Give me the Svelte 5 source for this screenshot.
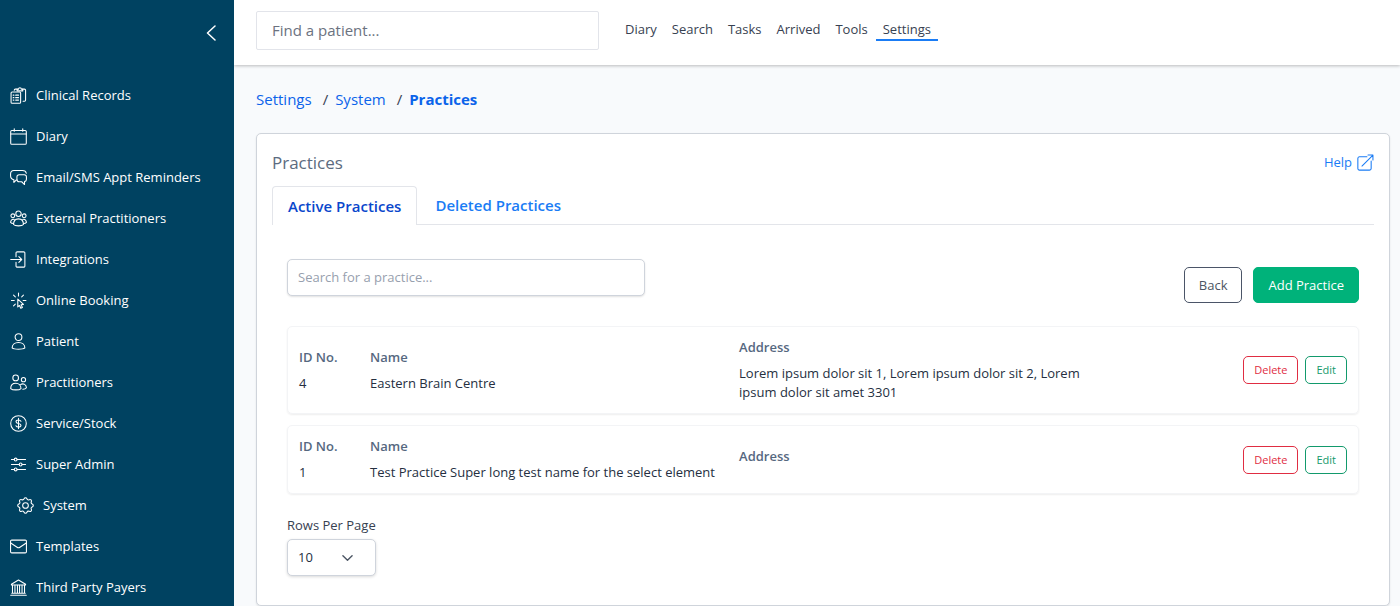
<script lang="ts">
	let sidebarItems = [
		{ label: 'Clinical Records', icon: 'records' },
		{ label: 'Diary', icon: 'calendar' },
		{ label: 'Email/SMS Appt Reminders', icon: 'chat' },
		{ label: 'External Practitioners', icon: 'group' },
		{ label: 'Integrations', icon: 'login' },
		{ label: 'Online Booking', icon: 'click' },
		{ label: 'Patient', icon: 'person' },
		{ label: 'Practitioners', icon: 'people' },
		{ label: 'Service/Stock', icon: 'dollar' },
		{ label: 'Super Admin', icon: 'sliders' },
		{ label: 'System', icon: 'gear', nested: true },
		{ label: 'Templates', icon: 'mail' },
		{ label: 'Third Party Payers', icon: 'bank' },
	];

	// 24x24 stroke icons
	const icons: Record<string, string[]> = {
		records: [
			'M3 7h10.500a1.500 1.500 0 0 1 1.500 1.500v13a1.500 1.500 0 0 1-1.500 1.500H3a1.500 1.500 0 0 1-1.500-1.500v-13A1.500 1.500 0 0 1 3 7z',
			'M4.500 11.500h1M8 11.500h4M4.500 15h1M8 15h4M4.500 18.500h1M8 18.500h4',
			'M6 4.500A1.500 1.500 0 0 1 7.500 3H10M18 3h2.500A1.500 1.500 0 0 1 22 4.500v14a1.500 1.500 0 0 1-1.500 1.500h-2',
			'M10 5.500h8V3h-2a2 2 0 0 0-4 0h-2z',
		],
		calendar: [
			'M2.500 3.500h19A1.500 1.500 0 0 1 23 5v16.500a1.500 1.500 0 0 1-1.500 1.500h-19A1.500 1.500 0 0 1 1 21.500V5a1.500 1.500 0 0 1 1.500-1.500z',
			'M1 8.500h22M6 1v3.500M18 1v3.500',
		],
		chat: [
			'M10 15.500H9L5.500 19v-3.800C2 14.500.8 12.500.8 9.500V7C.8 3.700 2.500 2 5.500 2h12c3 0 5 1.200 5.500 4',
			'M13 8h7c2 0 3.200 1.300 3.200 3v3.500c0 1.800-1 3-2.700 3.300V22l-4-4H13c-2 0-3.200-1.300-3.200-3.200V11c0-1.700 1.200-3 3.200-3z',
		],
		group: [
			'M12 1.500a3.800 3.800 0 1 0 0 7.600 3.800 3.800 0 0 0 0-7.600z',
			'M4 5.500a2.700 2.700 0 1 0 0 5.400 2.700 2.700 0 0 0 0-5.400zM20 5.500a2.700 2.700 0 1 0 0 5.400 2.700 2.700 0 0 0 0-5.400z',
			'M5 20.500c0-5 2.500-8 7-8s7 3 7 8c-2 2.500-12 2.500-14 0z',
			'M6 13.300c-3-.8-5 1.200-5.200 4.200.8 1 2 1.500 4 1.500M18 13.300c3-.8 5 1.200 5.200 4.200-.8 1-2 1.500-4 1.500',
		],
		login: [
			'M8.500 8V3a1.800 1.800 0 0 1 1.800-1.800h8.900A1.800 1.800 0 0 1 21 3v18a1.800 1.800 0 0 1-1.800 1.800h-8.900A1.800 1.800 0 0 1 8.500 21v-5',
			'M1 12h15.500M12.500 8l4 4-4 4',
		],
		click: [
			'M11 10v11l2.500-2 1.700 4 2.300-1-1.800-4 3.300-.5z',
			'M12 1.500v4M5 4.500 7.500 7M19 4.500 16.500 7M2 12h4M18.500 12h4M5 19.500 7.500 17',
		],
		person: [
			'M12 1a4.800 4.800 0 1 0 0 9.600A4.800 4.800 0 0 0 12 1z',
			'M3 21c0-4.500 4-7.500 9-7.500s9 3 9 7.500c-3 2.500-15 2.500-18 0z',
		],
		people: [
			'M8 1.500a4 4 0 1 0 0 8 4 4 0 0 0 0-8zM19 5a3 3 0 1 0 0 6 3 3 0 0 0 0-6z',
			'M1 20.500c0-4.500 3-7.500 7.200-7.500s7.300 3 7.300 7.500c-2.500 2.600-12 2.600-14.500 0z',
			'M15 14.700c4-2 8 .3 8.200 4.800-1 1.500-2.700 2-5 2',
		],
		dollar: [
			'M12 1a11 11 0 1 0 0 22 11 11 0 0 0 0-22z',
			'M15.500 8.800C14.900 7.700 13.600 7 12 7c-2 0-3.500 1-3.500 2.500 0 3.500 7 1.500 7 5C15.500 16 14 17 12 17c-1.700 0-3-.7-3.600-1.900M12 4.800v14.400',
		],
		sliders: [
			'M2 5h4M10 5h12M2 12h11M17 12h5M2 19h4M10 19h12',
			'M8 3a2 2 0 1 0 0 4 2 2 0 0 0 0-4zM15 10a2 2 0 1 0 0 4 2 2 0 0 0 0-4zM8 17a2 2 0 1 0 0 4 2 2 0 0 0 0-4z',
		],
		gear: [
			'M12 8a4 4 0 1 0 0 8 4 4 0 0 0 0-8z',
			'M10 2.500c.8-2 3.200-2 4 0 .6 1.500 1.800 2 3.300 1.300 2-.9 3.700.8 2.900 2.900-.6 1.500 0 2.700 1.300 3.300 2 .8 2 3.200 0 4-1.500.6-2 1.800-1.300 3.300.9 2-.8 3.700-2.900 2.900-1.500-.6-2.700 0-3.300 1.300-.8 2-3.200 2-4 0-.6-1.500-1.800-2-3.300-1.300-2 .9-3.700-.8-2.900-2.900.6-1.500 0-2.700-1.300-3.300-2-.8-2-3.200 0-4 1.500-.6 2-1.800 1.300-3.300-.9-2 .8-3.700 2.900-2.900 1.500.6 2.700 0 3.300-1.300z',
		],
		mail: [
			'M2.500 3h19a1.700 1.700 0 0 1 1.700 1.700v14.600a1.700 1.700 0 0 1-1.700 1.700h-19A1.700 1.700 0 0 1 .8 19.300V4.700A1.700 1.700 0 0 1 2.500 3z',
			'M1 7l9 6c1.300.9 2.700.9 4 0l9-6',
		],
		bank: [
			'M2 8.500V7.500l10-6 10 6v1z',
			'M3.500 9v11M7 9v11M10.500 9v11M13.500 9v11M17 9v11M20.500 9v11M2.500 20h19M1 23h22',
		],
		external: [
			'M14 4H3.500a2.300 2.300 0 0 0-2.300 2.300v14.200a2.300 2.300 0 0 0 2.300 2.300h14.200a2.300 2.300 0 0 0 2.300-2.300V10',
			'M7 17 22.500 1.500M15.500 1.500h7v7',
		],
	};

	let navItems = ['Diary', 'Search', 'Tasks', 'Arrived', 'Tools', 'Settings'];
	let tabs = ['Active Practices', 'Deleted Practices'];

	let practices = [
		{
			id: 4,
			name: 'Eastern Brain Centre',
			address: 'Lorem ipsum dolor sit 1, Lorem ipsum dolor sit 2, Lorem ipsum dolor sit amet 3301',
		},
		{ id: 1, name: 'Test Practice Super long test name for the select element', address: '' },
	];

	let activeNav = $state('Settings');
	let activeTab = $state('Active Practices');
	let rowsPerPage = $state('10');
</script>

{#snippet icon(name: string)}
	<svg class="icon" viewBox="0 0 24 24" aria-hidden="true">
		{#each icons[name] as d}
			<path {d} />
		{/each}
	</svg>
{/snippet}

<div class="layout">
	<aside class="sidebar">
		<button class="collapse" aria-label="Collapse menu">
			<svg viewBox="0 0 10 16" aria-hidden="true"><path d="M9 1 1.500 8 9 15" /></svg>
		</button>
		<nav aria-label="Settings menu">
			{#each sidebarItems as item}
				<a href="#{item.icon}" class:nested={item.nested}>
					{@render icon(item.icon)}
					{item.label}
				</a>
			{/each}
		</nav>
	</aside>

	<div class="page">
		<header class="topbar">
			<input type="text" class="find" placeholder="Find a patient..." aria-label="Find a patient" />
			<nav aria-label="Main">
				{#each navItems as item}
					<a
						href="#{item.toLowerCase()}"
						class:active={item === activeNav}
						onclick={() => (activeNav = item)}>{item}</a>
				{/each}
			</nav>
		</header>

		<main>
			<nav class="breadcrumbs" aria-label="Breadcrumb">
				<a href="#settings">Settings</a>
				<span>/</span>
				<a href="#system">System</a>
				<span>/</span>
				<a href="#practices" class="current">Practices</a>
			</nav>

			<section class="panel">
				<div class="panel-head">
					<h1>Practices</h1>
					<a href="#help" class="help">Help {@render icon('external')}</a>
				</div>

				<div class="tabs" role="tablist">
					{#each tabs as tab}
						<button
							role="tab"
							aria-selected={tab === activeTab}
							class:active={tab === activeTab}
							onclick={() => (activeTab = tab)}>{tab}</button>
					{/each}
				</div>

				<div class="content">
					<div class="toolbar">
						<input type="text" class="search" placeholder="Search for a practice..." aria-label="Search for a practice" />
						<div class="actions">
							<button class="btn">Back</button>
							<button class="btn primary">Add Practice</button>
						</div>
					</div>

					<div class="practices">
						{#each practices as practice}
							<article class="practice">
								<div class="field">
									<h2>ID No.</h2>
									<p>{practice.id}</p>
								</div>
								<div class="field">
									<h2>Name</h2>
									<p>{practice.name}</p>
								</div>
								<div class="field">
									<h2>Address</h2>
									{#if practice.address}
										<p>{practice.address}</p>
									{/if}
								</div>
								<div class="row-actions">
									<button class="btn small delete">Delete</button>
									<button class="btn small edit">Edit</button>
								</div>
							</article>
						{/each}
					</div>

					<div class="rows">
						<label for="rows-per-page">Rows Per Page</label>
						<div class="select">
							<select id="rows-per-page" bind:value={rowsPerPage}>
								<option>10</option>
								<option>25</option>
								<option>50</option>
							</select>
							<svg viewBox="0 0 12 8" aria-hidden="true"><path d="M1 1.500 6 6.500l5-5" /></svg>
						</div>
					</div>
				</div>
			</section>
		</main>
	</div>
</div>

<style>
	:global(body) {
		margin: 0;
		background: #f8fafc;
	}

	.layout {
		display: flex;
		height: 100vh;
		overflow: hidden;
		font-family: 'Open Sans', 'Noto Sans', sans-serif;
		font-size: 13px;
		line-height: 19px;
		color: #374151;
	}

	.layout *,
	.layout {
		box-sizing: border-box;
	}

	a {
		text-decoration: none;
	}

	button,
	input,
	select {
		font: inherit;
		margin: 0;
	}

	button {
		cursor: pointer;
	}

	h1,
	h2,
	p {
		margin: 0;
	}

	svg {
		fill: none;
		stroke: currentColor;
		stroke-width: 1.5;
		stroke-linecap: round;
		stroke-linejoin: round;
	}

	.icon {
		flex: none;
		width: 17px;
		height: 17px;
	}

	.sidebar {
		flex: none;
		width: 234px;
		background: #004261;
		color: #fff;
		overflow: hidden;
	}

	.collapse {
		display: block;
		margin: 24px 18px 33px auto;
		padding: 1px 0;
		height: 18px;
		border: none;
		background: none;
		color: inherit;
	}

	.collapse svg {
		display: block;
		width: 10px;
		height: 16px;
	}

	.sidebar a {
		display: flex;
		align-items: center;
		gap: 9px;
		height: 41px;
		padding-left: 10px;
		color: #fff;
	}

	.sidebar a.nested {
		padding-left: 17px;
	}

	.page {
		flex: 1;
		min-width: 0;
		overflow: hidden;
	}

	.topbar {
		position: relative;
		display: flex;
		align-items: center;
		gap: 19px;
		padding: 11px 22px 15px;
		background: #fff;
		box-shadow: 0 1px 3px rgba(0, 0, 0, 0.25);
	}

	.find {
		width: 343px;
		height: 39px;
		padding: 0 15px 2px;
		border: 1px solid #e2e4ea;
		border-radius: 2px;
		background: #fff;
		font-size: 15px;
	}

	.find::placeholder {
		color: #6b7280;
	}

	.topbar nav {
		display: flex;
		gap: 1px;
	}

	.topbar nav a {
		padding: 0 7px;
		border-bottom: 2px solid transparent;
		color: #374151;
	}

	.topbar nav a.active {
		border-color: #1a7cf5;
	}

	main {
		padding: 24px 10px 0 22px;
	}

	.breadcrumbs {
		display: flex;
		font-size: 15px;
		line-height: 20px;
		margin-bottom: 24px;
	}

	.breadcrumbs a {
		color: #0b63ea;
	}

	.breadcrumbs span {
		padding: 0 7px 0 11px;
	}

	.breadcrumbs .current {
		font-weight: 700;
	}

	.panel {
		padding: 17px 15px 29px;
		border: 1px solid #cfd4db;
		border-radius: 5px;
		background: #fff;
		box-shadow: 0 1px 2px rgba(0, 0, 0, 0.1);
	}

	.panel-head {
		display: flex;
		align-items: center;
		justify-content: space-between;
		margin-bottom: 12px;
	}

	h1 {
		font-size: 17px;
		font-weight: 400;
		line-height: 23px;
		color: #5b6b80;
	}

	.help {
		display: flex;
		align-items: center;
		gap: 5px;
		color: #1a7cf5;
	}

	.tabs {
		display: flex;
		align-items: flex-end;
		border-bottom: 1px solid #e3e5ea;
	}

	.tabs button {
		padding: 8px 18px 9px;
		border: none;
		background: none;
		font-size: 15px;
		font-weight: 600;
		line-height: 20px;
		color: #1a7cf5;
	}

	.tabs button.active {
		margin-bottom: -1px;
		padding: 9px 15px;
		border: 1px solid #e3e5ea;
		border-bottom: none;
		border-radius: 4px 4px 0 0;
		background: #fff;
		color: #0a47cc;
	}

	.content {
		padding: 34px 15px 0;
	}

	.toolbar {
		display: flex;
		justify-content: space-between;
		margin-bottom: 23px;
	}

	.search {
		width: 358px;
		height: 37px;
		padding: 0 10px 2px;
		border: 1px solid #cfd4dc;
		border-radius: 5px;
		background: #fff;
		box-shadow: 0 1px 2px rgba(0, 0, 0, 0.12);
	}

	.search::placeholder {
		color: #97a0ae;
	}

	.actions {
		display: flex;
		gap: 11px;
		padding-top: 8px;
	}

	.btn {
		height: 36px;
		padding: 0 14px;
		border: 1px solid #4b5568;
		border-radius: 5px;
		background: #fff;
		color: #4b5563;
	}

	.btn.primary {
		border-color: #00b27a;
		background: #00b27a;
		color: #fff;
	}

	.btn.small {
		height: 28px;
		padding: 0 10px;
		font-size: 11px;
		line-height: 16px;
	}

	.btn.delete {
		border-color: #e02d42;
		color: #e02d42;
	}

	.btn.edit {
		border-color: #129a6c;
		color: #129a6c;
	}

	.practices {
		display: flex;
		flex-direction: column;
		gap: 11px;
	}

	.practice {
		display: grid;
		grid-template-columns: 71px 34fr 34fr 22fr;
		align-items: center;
		padding: 11px;
		border: 1px solid #f3f4f6;
		border-radius: 5px;
		box-shadow: 0 1px 2px rgba(0, 0, 0, 0.07);
	}

	.field {
		padding-right: 12px;
		color: #252f3f;
	}

	h2 {
		margin-bottom: 7px;
		font-size: 13px;
		font-weight: 600;
		line-height: 19px;
		color: #56687f;
	}

	.row-actions {
		display: flex;
		justify-content: flex-end;
		gap: 7px;
	}

	.rows {
		display: flex;
		flex-direction: column;
		align-items: flex-start;
		gap: 4px;
		margin-top: 22px;
	}

	.select {
		position: relative;
	}

	select {
		appearance: none;
		width: 89px;
		height: 37px;
		padding: 0 10px;
		border: 1px solid #cfd4dc;
		border-radius: 5px;
		background: #fff;
		box-shadow: 0 1px 3px rgba(0, 0, 0, 0.15);
		color: #252f3f;
	}

	.select svg {
		position: absolute;
		top: 15px;
		right: 23px;
		width: 11px;
		height: 8px;
		stroke: #4b5563;
		pointer-events: none;
	}
</style>
